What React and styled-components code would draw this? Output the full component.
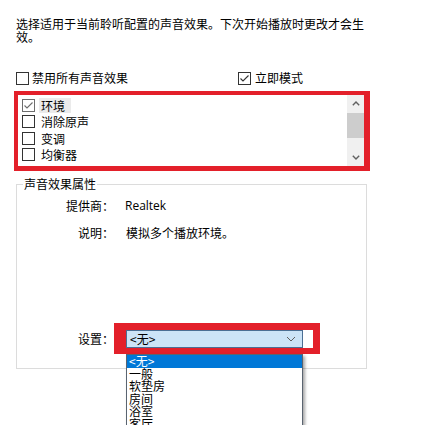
import React from 'react';
import styled, { createGlobalStyle } from 'styled-components';

const GlobalStyle = createGlobalStyle`
  html, body {
    margin: 0;
    padding: 0;
    background: #ffffff;
    overflow: hidden;
  }
  body {
    font-family: 'Noto Sans CJK SC', 'Noto Sans', sans-serif;
    font-size: 12px;
    color: #000000;
  }
`;

const Page = styled.div`
  width: 436px;
  height: 425px;
  box-sizing: border-box;
  padding: 17px 0 0 16px;
  overflow: hidden;
`;

const Intro = styled.p`
  margin: 0;
  width: 352px;
  line-height: 13px;
`;

const OptionsRow = styled.div`
  display: grid;
  grid-template-columns: 222px auto;
  margin-top: 27px;
  height: 16px;
  align-items: center;
`;

const CheckLabel = styled.label`
  display: flex;
  align-items: center;
  gap: ${(props) => props.gap || 3}px;
  line-height: 16px;
`;

const BoxSvg = styled.svg`
  flex: none;
  display: block;
`;

function CheckBox({ checked, tone = '#333333' }) {
  return (
    <BoxSvg width="13" height="13" viewBox="0 0 13 13">
      <rect x="0.5" y="0.5" width="12" height="12" fill="#ffffff" stroke={tone} />
      {checked && (
        <path d="M2.5 6.5 L5 9 L10.5 3.5" fill="none" stroke={tone} strokeWidth="1.1" />
      )}
    </BoxSvg>
  );
}

const EffectList = styled.div`
  display: flex;
  margin: 5px 0 0 -2px;
  width: 356px;
  height: 80px;
  box-sizing: border-box;
  border-style: solid;
  border-color: #e3202a;
  border-width: 4px 6px 5px 4px;
  background: #ffffff;
`;

const Items = styled.ul`
  flex: 1;
  list-style: none;
  margin: 0;
  padding: 2px 0 0 4px;
`;

const Item = styled.li`
  display: flex;
  align-items: center;
  height: 16.5px;
  gap: 4px;
`;

const ItemText = styled.span`
  line-height: 15px;
  padding: 0 6px 0 2px;
  background: ${(props) => (props.focused ? '#ebebeb' : 'transparent')};
`;

const ScrollBar = styled.div`
  width: 17px;
  background: #f0f0f0;
  display: flex;
  flex-direction: column;
`;

const ScrollButton = styled.div`
  height: 17px;
  display: flex;
  align-items: center;
  justify-content: center;
`;

const Thumb = styled.div`
  margin: 1px 0 0;
  height: 25px;
  background: #cdcdcd;
`;

const Track = styled.div`
  flex: 1;
`;

function Arrow({ up }) {
  return (
    <svg width="8" height="5" viewBox="0 0 8 5">
      <path
        d={up ? 'M0.8 4.3 L4 1.1 L7.2 4.3' : 'M0.8 0.7 L4 3.9 L7.2 0.7'}
        fill="none"
        stroke="#606060"
        strokeWidth="1.4"
      />
    </svg>
  );
}

const Group = styled.div`
  position: relative;
  margin-top: 13px;
  width: 351px;
  height: 185px;
  box-sizing: border-box;
  border: 1px solid #dcdcdc;
  padding: 13px 0 14px;
  display: flex;
  flex-direction: column;
`;

const Legend = styled.span`
  position: absolute;
  top: -9px;
  left: 6px;
  padding: 0 1px;
  background: #ffffff;
  line-height: 16px;
`;

const PropRow = styled.div`
  display: flex;
  align-items: center;
  line-height: 16px;
  margin-top: ${(props) => props.top || 0}px;
`;

const SettingsRow = styled(PropRow)`
  margin-top: auto;
`;

const PropLabel = styled.span`
  width: 97px;
  text-align: right;
  flex: none;
`;

const PropValue = styled.span`
  margin-left: ${(props) => props.indent}px;
  font-family: ${(props) =>
    props.latin ? "'Open Sans', 'Noto Sans', sans-serif" : "'Noto Sans CJK SC', sans-serif"};
`;

const Marker = styled.div`
  position: relative;
  border-style: solid;
  border-color: #e3202a;
  border-width: 7px 7px 6px 12px;
  padding-right: 10px;
  background: #ffffff;
`;

const Combo = styled.div`
  width: 177px;
  height: 18px;
  box-sizing: border-box;
  border: 1px solid #4b6f94;
  background: #cce4f7;
  display: flex;
  align-items: center;
  justify-content: space-between;
  padding: 0 6px 0 3px;
  line-height: 16px;
`;

const DropList = styled.ul`
  position: absolute;
  top: calc(100% + 6px);
  left: 0;
  width: 177px;
  box-sizing: border-box;
  margin: 0;
  padding: 0;
  list-style: none;
  background: #ffffff;
  border: 1px solid #5a6470;
  box-shadow: 2px 2px 3px rgba(0, 0, 0, 0.35);
`;

const DropItem = styled.li`
  height: 12.5px;
  line-height: 12.5px;
  font-size: 12px;
  padding-left: 2px;
  background: ${(props) => (props.active ? '#0078d7' : 'transparent')};
  color: ${(props) => (props.active ? '#ffffff' : '#000000')};
`;

const effects = [
  { name: '环境', checked: true },
  { name: '消除原声' },
  { name: '变调' },
  { name: '均衡器' },
];

const presets = ['<无>', '一般', '软垫房', '房间', '浴室', '客厅'];

export default function App() {
  return (
    <>
      <GlobalStyle />
      <Page>
        <Intro>选择适用于当前聆听配置的声音效果。下次开始播放时更改才会生效。</Intro>
        <OptionsRow>
          <CheckLabel gap={3}>
            <CheckBox />
            禁用所有声音效果
          </CheckLabel>
          <CheckLabel gap={4}>
            <CheckBox checked />
            立即模式
          </CheckLabel>
        </OptionsRow>
        <EffectList>
          <Items>
            {effects.map((fx, i) => (
              <Item key={fx.name}>
                <CheckBox checked={fx.checked} tone={i === 0 ? '#6d6d6d' : '#333333'} />
                <ItemText focused={i === 0}>{fx.name}</ItemText>
              </Item>
            ))}
          </Items>
          <ScrollBar>
            <ScrollButton>
              <Arrow up />
            </ScrollButton>
            <Thumb />
            <Track />
            <ScrollButton>
              <Arrow />
            </ScrollButton>
          </ScrollBar>
        </EffectList>
        <Group>
          <Legend>声音效果属性</Legend>
          <PropRow>
            <PropLabel>提供商：</PropLabel>
            <PropValue latin indent={11}>Realtek</PropValue>
          </PropRow>
          <PropRow top={11}>
            <PropLabel>说明：</PropLabel>
            <PropValue indent={12}>模拟多个播放环境。</PropValue>
          </PropRow>
          <SettingsRow>
            <PropLabel>设置：</PropLabel>
            <Marker>
              <Combo>
                <span>&lt;无&gt;</span>
                <svg width="10" height="6" viewBox="0 0 10 6">
                  <path d="M1 1 L5 5 L9 1" fill="none" stroke="#606060" strokeWidth="1" />
                </svg>
              </Combo>
              <DropList>
                {presets.map((p, i) => (
                  <DropItem key={p} active={i === 0}>
                    {p}
                  </DropItem>
                ))}
              </DropList>
            </Marker>
          </SettingsRow>
        </Group>
      </Page>
    </>
  );
}
